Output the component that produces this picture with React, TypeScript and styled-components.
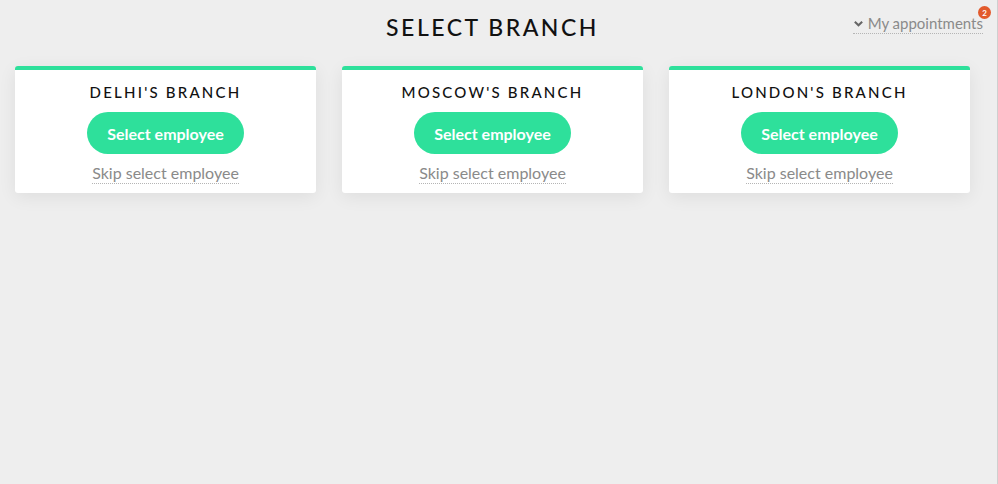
import styled, { createGlobalStyle } from 'styled-components';
import { FunctionComponent } from 'react';

const GlobalStyle = createGlobalStyle`
  html, body {
    margin: 0;
    padding: 0;
    background: #eeeeee;
  }
  body {
    font-family: 'Lato', 'Open Sans', sans-serif;
  }
`;

const Frame = styled.div`
  display: flex;
  width: 998px;
  height: 484px;
  box-sizing: border-box;
  border-right: 1px solid #cfcfcf;
`;

const Page = styled.main`
  width: 985px;
  padding: 0 15px;
  box-sizing: border-box;
`;

const Header = styled.header`
  position: relative;
  height: 66px;
  display: flex;
  align-items: flex-start;
  justify-content: center;
`;

const Title = styled.h1`
  margin: 13px 0 0;
  font-size: 23px;
  font-weight: 500;
  letter-spacing: 2.5px;
  color: #111;
  line-height: 28px;
`;

const Appointments = styled.a`
  position: absolute;
  right: -13px;
  top: 14px;
  display: flex;
  align-items: center;
  gap: 4px;
  font-size: 15px;
  line-height: 18px;
  color: #8a8a8a;
  border-bottom: 1px dotted #b5b5b5;
  padding-bottom: 1px;
  cursor: pointer;

  svg {
    width: 11px;
    height: 11px;
  }
`;

const Badge = styled.span`
  position: absolute;
  right: -8px;
  top: -8px;
  width: 13px;
  height: 13px;
  border-radius: 50%;
  background: #e25a2c;
  color: #fff;
  font-size: 8px;
  font-weight: 700;
  display: flex;
  align-items: center;
  justify-content: center;
`;

const Cards = styled.section`
  display: grid;
  grid-template-columns: repeat(3, 301px);
  gap: 26px;
`;

const Card = styled.article`
  background: #fff;
  border-top: 4px solid #2ee09b;
  border-radius: 3px;
  box-shadow: 0 4px 18px rgba(0, 0, 0, 0.07);
  height: 127px;
  box-sizing: border-box;
  display: flex;
  flex-direction: column;
  align-items: center;
  padding-top: 14px;
`;

const BranchName = styled.h2`
  margin: 0;
  font-size: 15px;
  font-weight: 500;
  letter-spacing: 2.2px;
  color: #111;
  line-height: 16px;
`;

const SelectButton = styled.button`
  margin-top: 12px;
  width: 157px;
  height: 42px;
  border: none;
  border-radius: 21px;
  background: #2ee09b;
  color: #fff;
  font-family: inherit;
  font-size: 16px;
  font-weight: 700;
  cursor: pointer;
`;

const SkipLink = styled.a`
  margin-top: 10px;
  font-size: 16px;
  line-height: 18px;
  color: #8a8a8a;
  border-bottom: 1px dotted #b5b5b5;
  padding-bottom: 1px;
  cursor: pointer;
`;

const branches = ["DELHI'S BRANCH", "MOSCOW'S BRANCH", "LONDON'S BRANCH"];

const App: FunctionComponent = () => {
  return (
    <Frame>
      <GlobalStyle />
      <Page>
        <Header>
          <Title>SELECT BRANCH</Title>
          <Appointments>
            <svg viewBox="0 0 12 12" fill="none" stroke="#666" strokeWidth="2.2">
              <path d="M2 4l4 4 4-4" />
            </svg>
            My appointments
            <Badge>2</Badge>
          </Appointments>
        </Header>

        <Cards>
          {branches.map((name) => (
            <Card key={name}>
              <BranchName>{name}</BranchName>
              <SelectButton>Select employee</SelectButton>
              <SkipLink>Skip select employee</SkipLink>
            </Card>
          ))}
        </Cards>
      </Page>
    </Frame>
  );
};

export default App;
